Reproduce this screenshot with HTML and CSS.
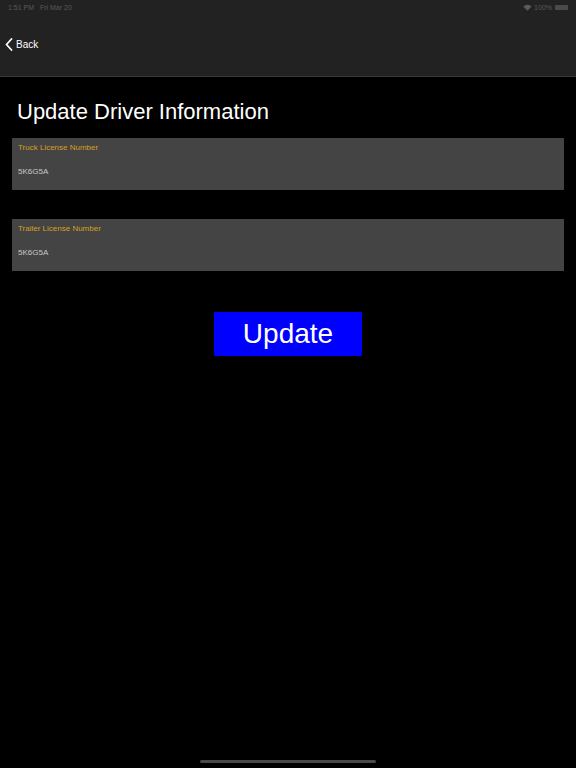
FILE: index.html
```html
<!DOCTYPE html>
<html>
<head>
<meta charset="utf-8">
<link rel="stylesheet" href="styles.css">
</head>
<body>
<div class="screen">
  <header class="topbar">
    <div class="status">
      <span class="time">1:51 PM&nbsp;&nbsp;&nbsp;Fri Mar 20</span>
      <span class="status-right">
        <svg class="wifi" width="9" height="7" viewBox="0 0 9 7"><path d="M4.5 6.8 L0.3 2.4 A6 6 0 0 1 8.7 2.4 Z" fill="#5a5a5a"/></svg>
        <span class="pct">100%</span>
        <span class="battery"><span class="battery-fill"></span></span>
      </span>
    </div>
    <nav class="navbar">
      <a class="back">
        <svg width="8" height="13" viewBox="0 0 8 13"><path d="M6.5 1 L1.5 6.5 L6.5 12" fill="none" stroke="#fff" stroke-width="1.8" stroke-linecap="round" stroke-linejoin="round"/></svg>
        <span>Back</span>
      </a>
    </nav>
  </header>
  <main class="content">
    <h1 class="title">Update Driver Information</h1>
    <div class="field">
      <div class="field-label">Truck License Number</div>
      <div class="field-value">5K6G5A</div>
    </div>
    <div class="field">
      <div class="field-label">Trailer License Number</div>
      <div class="field-value">5K6G5A</div>
    </div>
    <div class="actions">
      <button class="update-btn">Update</button>
    </div>
  </main>
  <div class="home-indicator"></div>
</div>
</body>
</html>
```
FILE: styles.css
```css
* { box-sizing: border-box; }
html, body {
  margin: 0;
  padding: 0;
  background: #000;
  font-family: "Liberation Sans", Arial, sans-serif;
}
.screen {
  width: 576px;
  height: 768px;
  position: relative;
  display: flex;
  flex-direction: column;
  background: #000;
  overflow: hidden;
}
.topbar {
  background: #222222;
  height: 77px;
  border-bottom: 1px solid #3a3a3a;
  display: flex;
  flex-direction: column;
}
.status {
  height: 14px;
  display: flex;
  justify-content: space-between;
  align-items: center;
  padding: 0 8px 0 8px;
  font-size: 7px;
  color: #5a5a5a;
}
.status-right {
  display: flex;
  align-items: center;
  gap: 2px;
}
.battery {
  width: 13px;
  height: 5px;
  border-radius: 1px;
  background: #4a4a4a;
  display: inline-block;
  margin-left: 1px;
}
.navbar {
  flex: 1;
  display: flex;
  align-items: center;
  padding-left: 5px;
  padding-bottom: 1px;
}
.back {
  display: flex;
  align-items: center;
  gap: 3px;
  color: #fff;
  font-size: 10px;
}
.content {
  padding: 22px 12px 0 12px;
  display: flex;
  flex-direction: column;
}
.title {
  margin: 0 0 13px 5px;
  font-weight: normal;
  font-size: 22px;
  line-height: 26px;
  color: #fff;
  font-family: "Liberation Sans", Arial, sans-serif;
}
.field {
  height: 52px;
  background: #444444;
  padding: 5px 6px;
  margin-bottom: 29px;
}
.field-label {
  color: #d89f20;
  font-size: 8px;
  line-height: 9px;
}
.field-value {
  margin-top: 15px;
  color: #c8c8c8;
  font-size: 8px;
  line-height: 9px;
}
.actions {
  display: flex;
  justify-content: center;
  margin-top: 12px;
}
.update-btn {
  width: 148px;
  height: 44px;
  background: #0000ff;
  color: #fff;
  border: none;
  font-family: "Liberation Sans", Arial, sans-serif;
  font-size: 28px;
  padding: 0;
}
.home-indicator {
  position: absolute;
  left: 200px;
  bottom: 5px;
  width: 176px;
  height: 3px;
  border-radius: 2px;
  background: #4a4a4a;
}
```
